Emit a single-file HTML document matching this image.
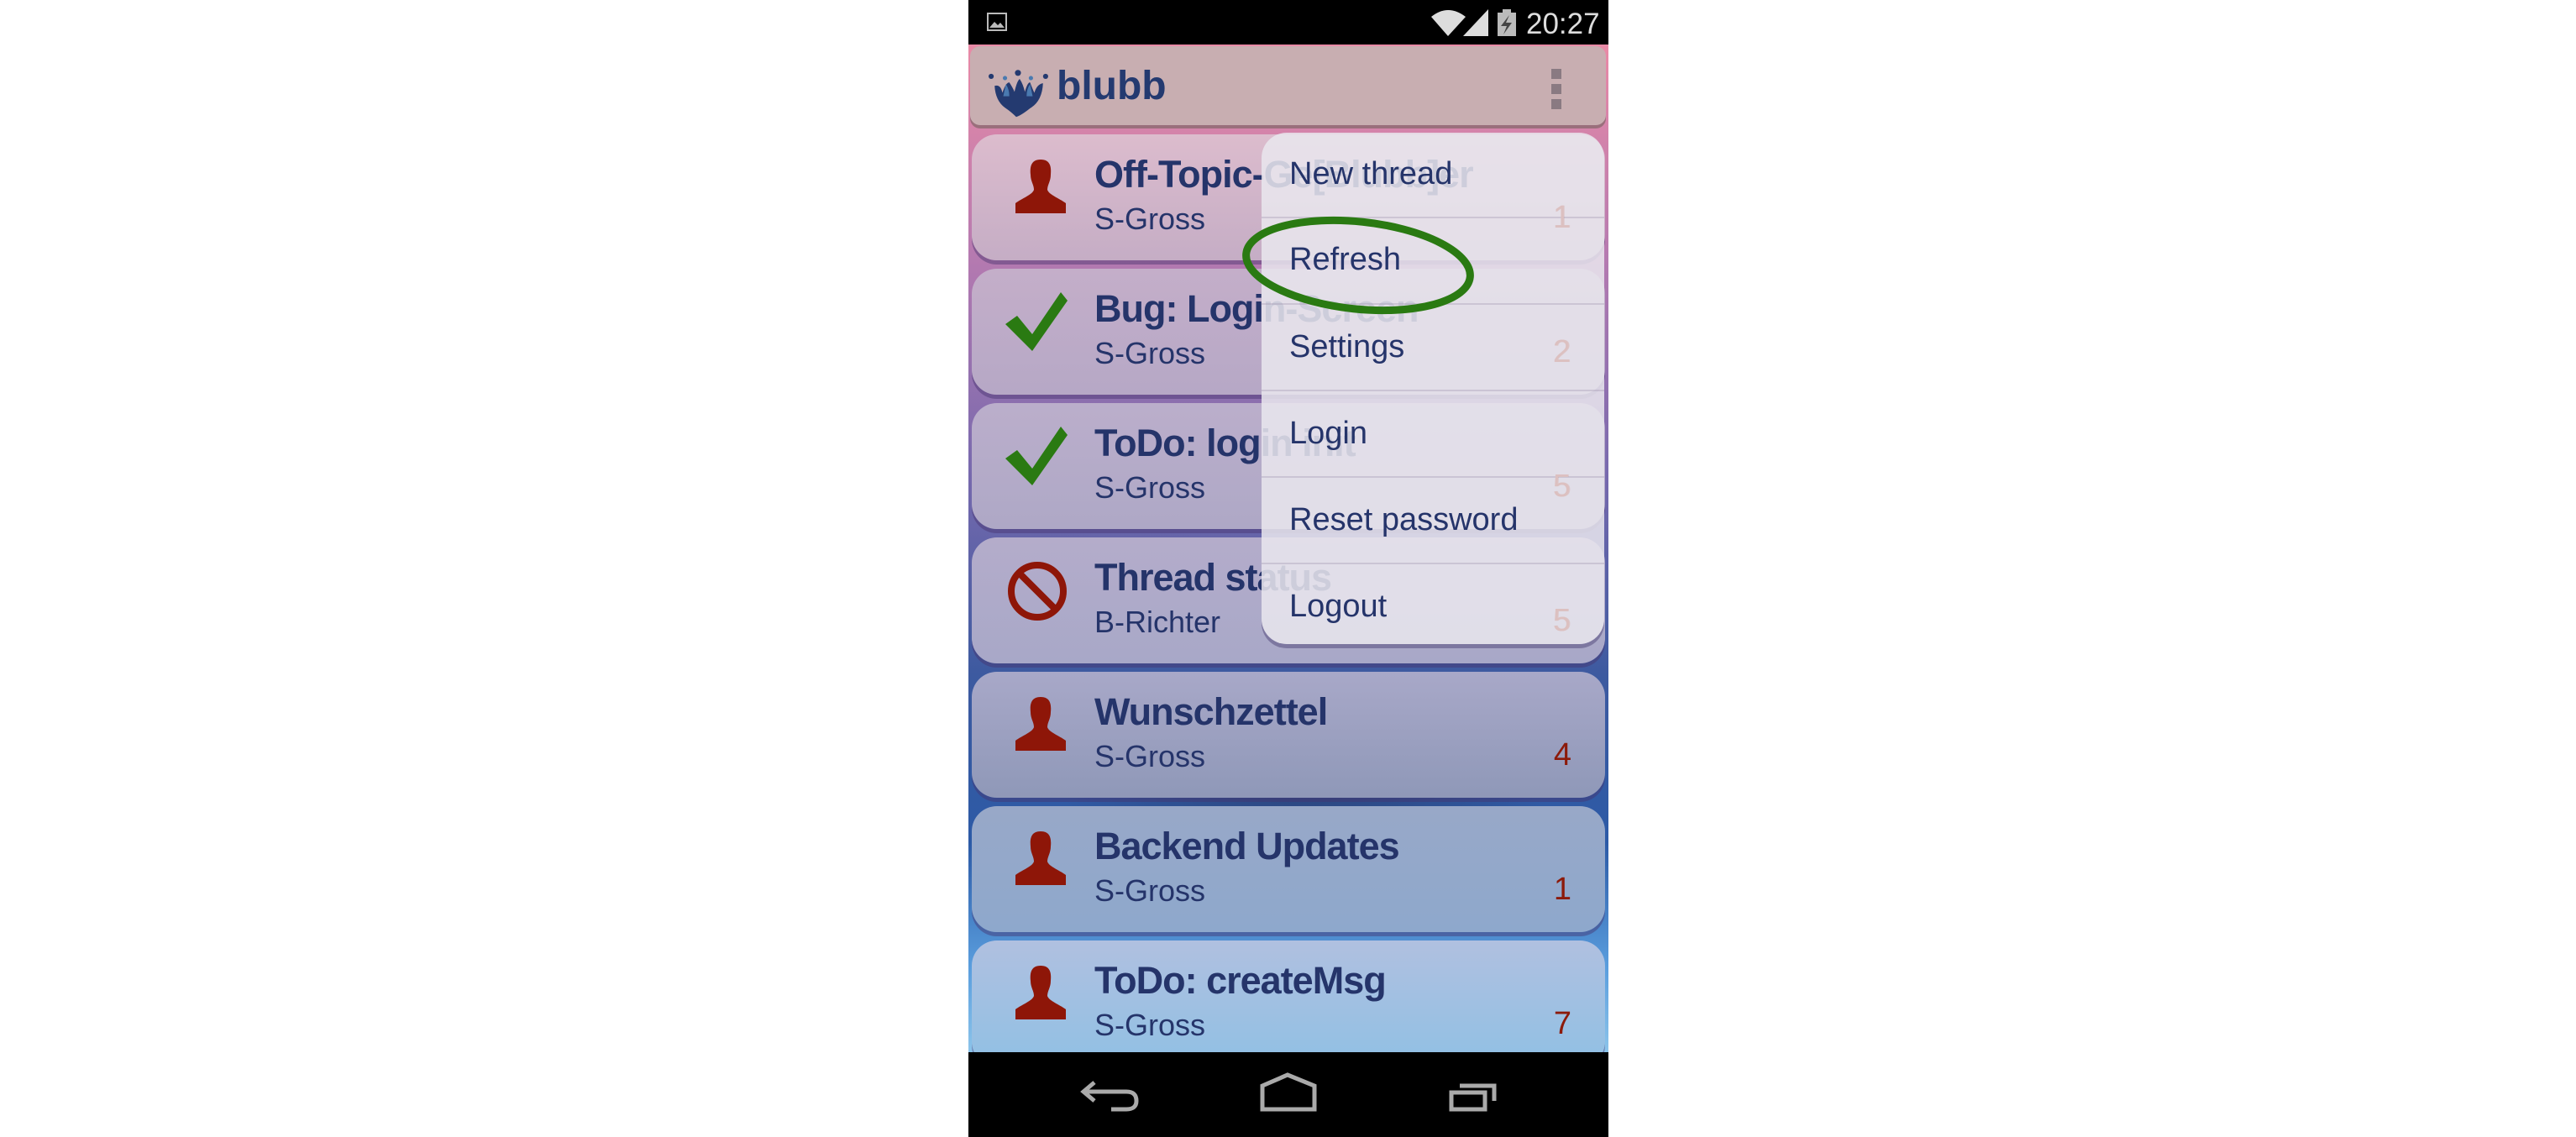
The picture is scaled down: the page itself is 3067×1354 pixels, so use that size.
<!DOCTYPE html>
<html><head><meta charset="utf-8"><style>
*{margin:0;padding:0;box-sizing:border-box}
body{width:3067px;height:1354px;background:#fff;position:relative;overflow:hidden;font-family:"Liberation Sans",sans-serif}
#phone{position:absolute;left:1153px;top:0;width:762px;height:1354px;background:#000;overflow:hidden}
#bg{position:absolute;left:0;top:53px;width:762px;height:1201px;
background:radial-gradient(ellipse 300px 120px at 400px 870px,rgba(40,50,90,.6),rgba(0,0,0,0)),linear-gradient(180deg,#e98aa6 0px,#b67ab0 250px,#7a6aae 500px,#3d5aa0 750px,#2c5aa6 950px,#5a9ede 1100px,#8cc4ea 1201px)}
.ab{position:absolute;left:2px;top:55px;width:757px;height:94px;background:#c8aeb1;border-radius:12px;box-shadow:0 4px 0 #9a6f7c}
.card{position:absolute;left:4px;width:754px;height:150px;border-radius:30px;box-shadow:0 5px 0 rgba(70,50,110,.45)}
.t{position:absolute;left:146px;top:22px;font-size:45px;font-weight:bold;color:#25346a;letter-spacing:-1px;white-space:nowrap}
.s{position:absolute;left:146px;top:80px;font-size:36px;color:#25346a;white-space:nowrap}
.n{position:absolute;right:40px;top:78px;font-size:38px;color:#8c1a0a}
.ic{position:absolute;left:50px;top:30px}
#menu{position:absolute;left:349px;top:158px;width:408px;height:609px;background:rgba(233,230,238,.86);border-radius:30px;box-shadow:0 5px 0 rgba(80,70,120,.5)}
.mi{position:absolute;left:33px;font-size:38px;color:#25346a}
.sep{position:absolute;left:0;width:408px;height:2px;background:rgba(160,150,175,.35)}
.mn{position:absolute;right:40px;font-size:38px;color:#dcc0c0}
</style></head><body>
<div id="phone">
<div style="position:absolute;left:0;top:0;width:762px;height:53px;background:#000">
<svg width="762" height="53" style="position:absolute;left:0;top:0">
<rect x="23" y="16" width="22" height="20" fill="none" stroke="#bbb" stroke-width="2"/><path d="M25 33 L31 26 L35 30 L38 27 L43 33Z" fill="#bbb"/>
<path d="M551 20 Q571 4 592 20 L571 43Z" fill="#ddd"/>
<path d="M589 43 L619 11 L619 43Z" fill="#ddd"/>
<rect x="630" y="15" width="22" height="28" fill="#bbb"/><rect x="636" y="11" width="10" height="5" fill="#bbb"/><path d="M644 18 L634 31 L641 31 L637 41 L647 27 L640 27Z" fill="#444"/>
</svg>
<div style="position:absolute;left:664px;top:9px;font-size:35px;color:#ddd">20:27</div>
</div>
<div id="bg"></div>
<div class="ab">
<svg width="72" height="58" style="position:absolute;left:22px;top:28px" viewBox="0 0 70 55">
<circle cx="3" cy="7" r="3" fill="#243a70"/><circle cx="34" cy="3" r="3.5" fill="#243a70"/><circle cx="66" cy="7" r="3" fill="#243a70"/>
<circle cx="19" cy="9" r="2.5" fill="#4a7ab0"/><circle cx="49" cy="9" r="2.5" fill="#4a7ab0"/>
<path d="M7 18 Q14 16 16 26 Q20 14 24 14 Q28 20 30 25 Q33 12 36 10 Q40 16 42 25 Q45 14 48 14 Q51 22 53 26 Q56 16 63 15 Q62 36 48 44 Q38 52 32 54 Q26 48 20 44 Q8 36 7 18Z" fill="#243a70"/>
<path d="M20 16 Q24 22 24 30 L17 30Z M48 16 Q44 22 44 30 L51 30Z" fill="#4a7ab0"/>
</svg>
<div style="position:absolute;left:103px;top:20px;font-size:48px;font-weight:bold;color:#243a70">blubb</div>
<div style="position:absolute;left:692px;top:27px;width:12px;height:12px;background:#8a7a82"></div>
<div style="position:absolute;left:692px;top:45px;width:12px;height:12px;background:#8a7a82"></div>
<div style="position:absolute;left:692px;top:63px;width:12px;height:12px;background:#8a7a82"></div>
</div>

<div class="card" style="top:160px;background:linear-gradient(#dcbccd,#c5adc5)">
<svg class="ic" width="64" height="64" viewBox="0 0 64 64"><path d="M32 0 C21 0 19 8 20 18 C20 26 24 30 24 36 C22 42 10 46 2 52 L2 64 L62 64 L62 52 C54 46 42 42 40 36 C40 30 44 26 44 18 C45 8 43 0 32 0Z" fill="#8e1608"/></svg>
<div class="t">Off-Topic-Ge[Blubb]er</div><div class="s">S-Gross</div><div class="n">1</div></div>
<div class="card" style="top:320px;background:linear-gradient(#c4aec9,#b6a8c6)">
<svg class="ic" width="74" height="70" viewBox="0 0 74 70" style="left:40px;top:28px"><path d="M0 38 L14 28 L32 50 L66 0 L74 10 L32 70Z" fill="#2a7a12"/></svg>
<div class="t">Bug: Login-Screen</div><div class="s">S-Gross</div><div class="n">2</div></div>
<div class="card" style="top:480px;background:linear-gradient(#bbaecb,#aea8c6)">
<svg class="ic" width="74" height="70" viewBox="0 0 74 70" style="left:40px;top:28px"><path d="M0 38 L14 28 L32 50 L66 0 L74 10 L32 70Z" fill="#2a7a12"/></svg>
<div class="t">ToDo: login init</div><div class="s">S-Gross</div><div class="n">5</div></div>
<div class="card" style="top:640px;background:linear-gradient(#b4acca,#a8a8c8)">
<svg class="ic" width="72" height="72" viewBox="0 0 72 72" style="left:42px;top:28px"><circle cx="36" cy="36" r="31" fill="none" stroke="#8e1608" stroke-width="8"/><path d="M14 14 L58 58" stroke="#8e1608" stroke-width="8"/></svg>
<div class="t">Thread status</div><div class="s">B-Richter</div><div class="n">5</div></div>
<div class="card" style="top:800px;background:linear-gradient(#a8a8c8,#8f98b8)">
<svg class="ic" width="64" height="64" viewBox="0 0 64 64"><path d="M32 0 C21 0 19 8 20 18 C20 26 24 30 24 36 C22 42 10 46 2 52 L2 64 L62 64 L62 52 C54 46 42 42 40 36 C40 30 44 26 44 18 C45 8 43 0 32 0Z" fill="#8e1608"/></svg>
<div class="t">Wunschzettel</div><div class="s">S-Gross</div><div class="n">4</div></div>
<div class="card" style="top:960px;background:linear-gradient(#98a8c8,#8ea8cc)">
<svg class="ic" width="64" height="64" viewBox="0 0 64 64"><path d="M32 0 C21 0 19 8 20 18 C20 26 24 30 24 36 C22 42 10 46 2 52 L2 64 L62 64 L62 52 C54 46 42 42 40 36 C40 30 44 26 44 18 C45 8 43 0 32 0Z" fill="#8e1608"/></svg>
<div class="t">Backend Updates</div><div class="s">S-Gross</div><div class="n">1</div></div>
<div class="card" style="top:1120px;background:linear-gradient(#b0c0e0,#90c0e4)">
<svg class="ic" width="64" height="64" viewBox="0 0 64 64"><path d="M32 0 C21 0 19 8 20 18 C20 26 24 30 24 36 C22 42 10 46 2 52 L2 64 L62 64 L62 52 C54 46 42 42 40 36 C40 30 44 26 44 18 C45 8 43 0 32 0Z" fill="#8e1608"/></svg>
<div class="t">ToDo: createMsg</div><div class="s">S-Gross</div><div class="n">7</div></div>

<div id="menu">
<div class="mi" style="top:28px">New thread</div>
<div class="sep" style="top:100px"></div>
<div class="mi" style="top:130px">Refresh</div>
<div class="sep" style="top:203px"></div>
<div class="mi" style="top:234px">Settings</div>
<div class="sep" style="top:306px"></div>
<div class="mi" style="top:337px">Login</div>
<div class="sep" style="top:409px"></div>
<div class="mi" style="top:440px">Reset password</div>
<div class="sep" style="top:512px"></div>
<div class="mi" style="top:543px">Logout</div>
<div class="mn" style="top:80px">1</div>
<div class="mn" style="top:240px">2</div>
<div class="mn" style="top:400px">5</div>
<div class="mn" style="top:560px">5</div>
</div>
<svg width="300" height="140" style="position:absolute;left:318px;top:246px"><ellipse cx="146" cy="70" rx="134" ry="52" transform="rotate(6 146 70)" fill="none" stroke="#2a7a12" stroke-width="9"/></svg>

<div style="position:absolute;left:0;top:1253px;width:762px;height:101px;background:#000">
<svg width="762" height="101">
<path d="M150 36 L137 47 L150 58 M138 47 L188 47 Q200 47 200 58 Q200 68 188 68 L170 68" fill="none" stroke="#aaa" stroke-width="5"/>
<path d="M350 40 L380 27 L412 40 L412 68 L350 68Z" fill="none" stroke="#aaa" stroke-width="5"/>
<path d="M575 48 L575 68 L615 68 L615 48Z M585 40 L626 40 L626 58" fill="none" stroke="#aaa" stroke-width="5"/>
</svg></div>
</div>
</body></html>
